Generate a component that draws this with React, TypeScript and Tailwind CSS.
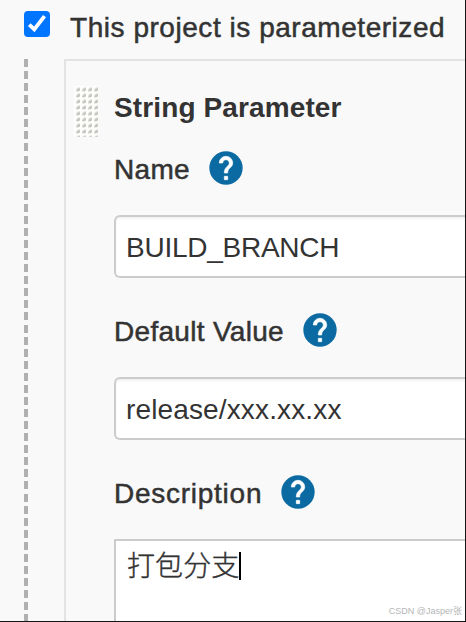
import React from 'react';

interface FieldLabelProps {
  text: string;
  className: string;
}

function HelpIcon() {
  return (
    <svg viewBox="0 0 24 24" className="size-10 shrink-0">
      <circle cx="12" cy="12" r="10" fill="#0b6aa2" />
      <path
        d="M13 19h-2v-2h2v2zm2.070-7.750l-.9.920C13.450 12.900 13 13.500 13 15h-2v-.5c0-1.100.450-2.100 1.170-2.830l1.240-1.260c.370-.360.590-.860.590-1.410 0-1.100-.9-2-2-2s-2 .9-2 2H8c0-2.210 1.790-4 4-4s4 1.790 4 4c0 .880-.360 1.680-.930 2.250z"
        fill="white"
        stroke="white"
        strokeWidth="0.4"
      />
    </svg>
  );
}

function FieldLabel({ text, className }: FieldLabelProps) {
  return (
    <div className="flex h-10 items-center">
      <span className={`mt-1 whitespace-nowrap leading-8 [-webkit-text-stroke:0.5px_#333] ${className}`}>
        {text}
      </span>
      <HelpIcon />
    </div>
  );
}

interface TextFieldProps {
  value: string;
  className: string;
}

function TextField({ value, className }: TextFieldProps) {
  return (
    <div className="mt-[27px] mb-8 flex h-[63px] items-center rounded-l-md border-2 border-r-0 border-[#ccc] bg-white pl-[10px] shadow-[inset_0_2px_2px_rgba(0,0,0,0.05)]">
      <span className={`mt-[2px] whitespace-nowrap ${className}`}>{value}</span>
    </div>
  );
}

function DragHandle() {
  return (
    <svg width="24" height="51" className="mt-[25px] ml-2 shrink-0">
      <defs>
        <pattern id="grip" width="6" height="6" patternUnits="userSpaceOnUse">
          <rect width="6" height="6" fill="#fdfdfb" />
          <path d="M2 5.5V3.5L4 1.5H6V4L4.5 5.5Z" fill="#d8d8d4" />
          <path d="M3 5V4L4.500 2.500H6V4L5 5Z" fill="#c4c4c0" />
        </pattern>
      </defs>
      <rect width="24" height="51" fill="url(#grip)" />
    </svg>
  );
}

export default function App() {
  return (
    <div className="relative flex h-[622px] w-[466px] flex-col overflow-hidden border-r border-b border-[#151515] bg-[#f9f9f9] font-['Liberation_Sans','Noto_Sans_CJK_SC',sans-serif] text-[28px] text-[#333]">
      <div className="flex h-[59px] shrink-0 items-start pl-6">
        <div className="mt-[11px] flex size-[26px] shrink-0 items-center justify-center rounded-[4px] bg-[#0075ff]">
          <svg width="26" height="26" viewBox="0 0 26 26" fill="none" stroke="white" strokeWidth="3.8">
            <path d="M5.300 13.600L10.300 18.400L20.500 5.200" />
          </svg>
        </div>
        <span className="mt-3 ml-5 whitespace-nowrap leading-8 tracking-[0.54px] [-webkit-text-stroke:0.5px_#333]">
          This project is parameterized
        </span>
      </div>

      <div className="flex min-h-0 flex-1 pl-6">
        <div className="w-1 shrink-0 bg-[repeating-linear-gradient(to_bottom,#b0b0b0_0_8px,transparent_8px_12.07px)]" />
        <div className="ml-9 flex min-w-0 flex-1 border-t-2 border-l-2 border-[#e3e3e3]">
          <DragHandle />
          <div className="ml-4 flex min-w-0 flex-1 flex-col">
            <div className="mt-[31px] mb-[29px] h-8 shrink-0 whitespace-nowrap font-bold leading-8 tracking-[0.12px]">
              String Parameter
            </div>
            <div className="-mt-[5px] flex flex-col">
              <FieldLabel text="Name" className="mr-4 tracking-[0.3px]" />
              <TextField value="BUILD_BRANCH" className="tracking-[-0.25px]" />
              <FieldLabel text="Default Value" className="mr-4 tracking-[0.3px]" />
              <TextField value="release/xxx.xx.xx" className="tracking-[0.14px]" />
              <FieldLabel text="Description" className="mr-4 tracking-[0.74px]" />
              <div className="mt-[27px] flex h-24 items-start border-2 border-r-0 border-[#ccc] bg-white pt-[5px] pl-[11px]">
                <span className="whitespace-nowrap font-['Noto_Sans_CJK_SC',sans-serif] leading-9 font-light tracking-[0.1px] [-webkit-text-stroke:0.4px_#333]">
                  打包分支
                </span>
                <span className="mt-[6px] h-7 w-[2px] bg-black" />
              </div>
            </div>
          </div>
        </div>
      </div>

      <span className="absolute right-[3px] bottom-1 whitespace-nowrap text-[9px] leading-3 text-[#b5b5b5]">
        CSDN @Jasper张
      </span>
    </div>
  );
}
